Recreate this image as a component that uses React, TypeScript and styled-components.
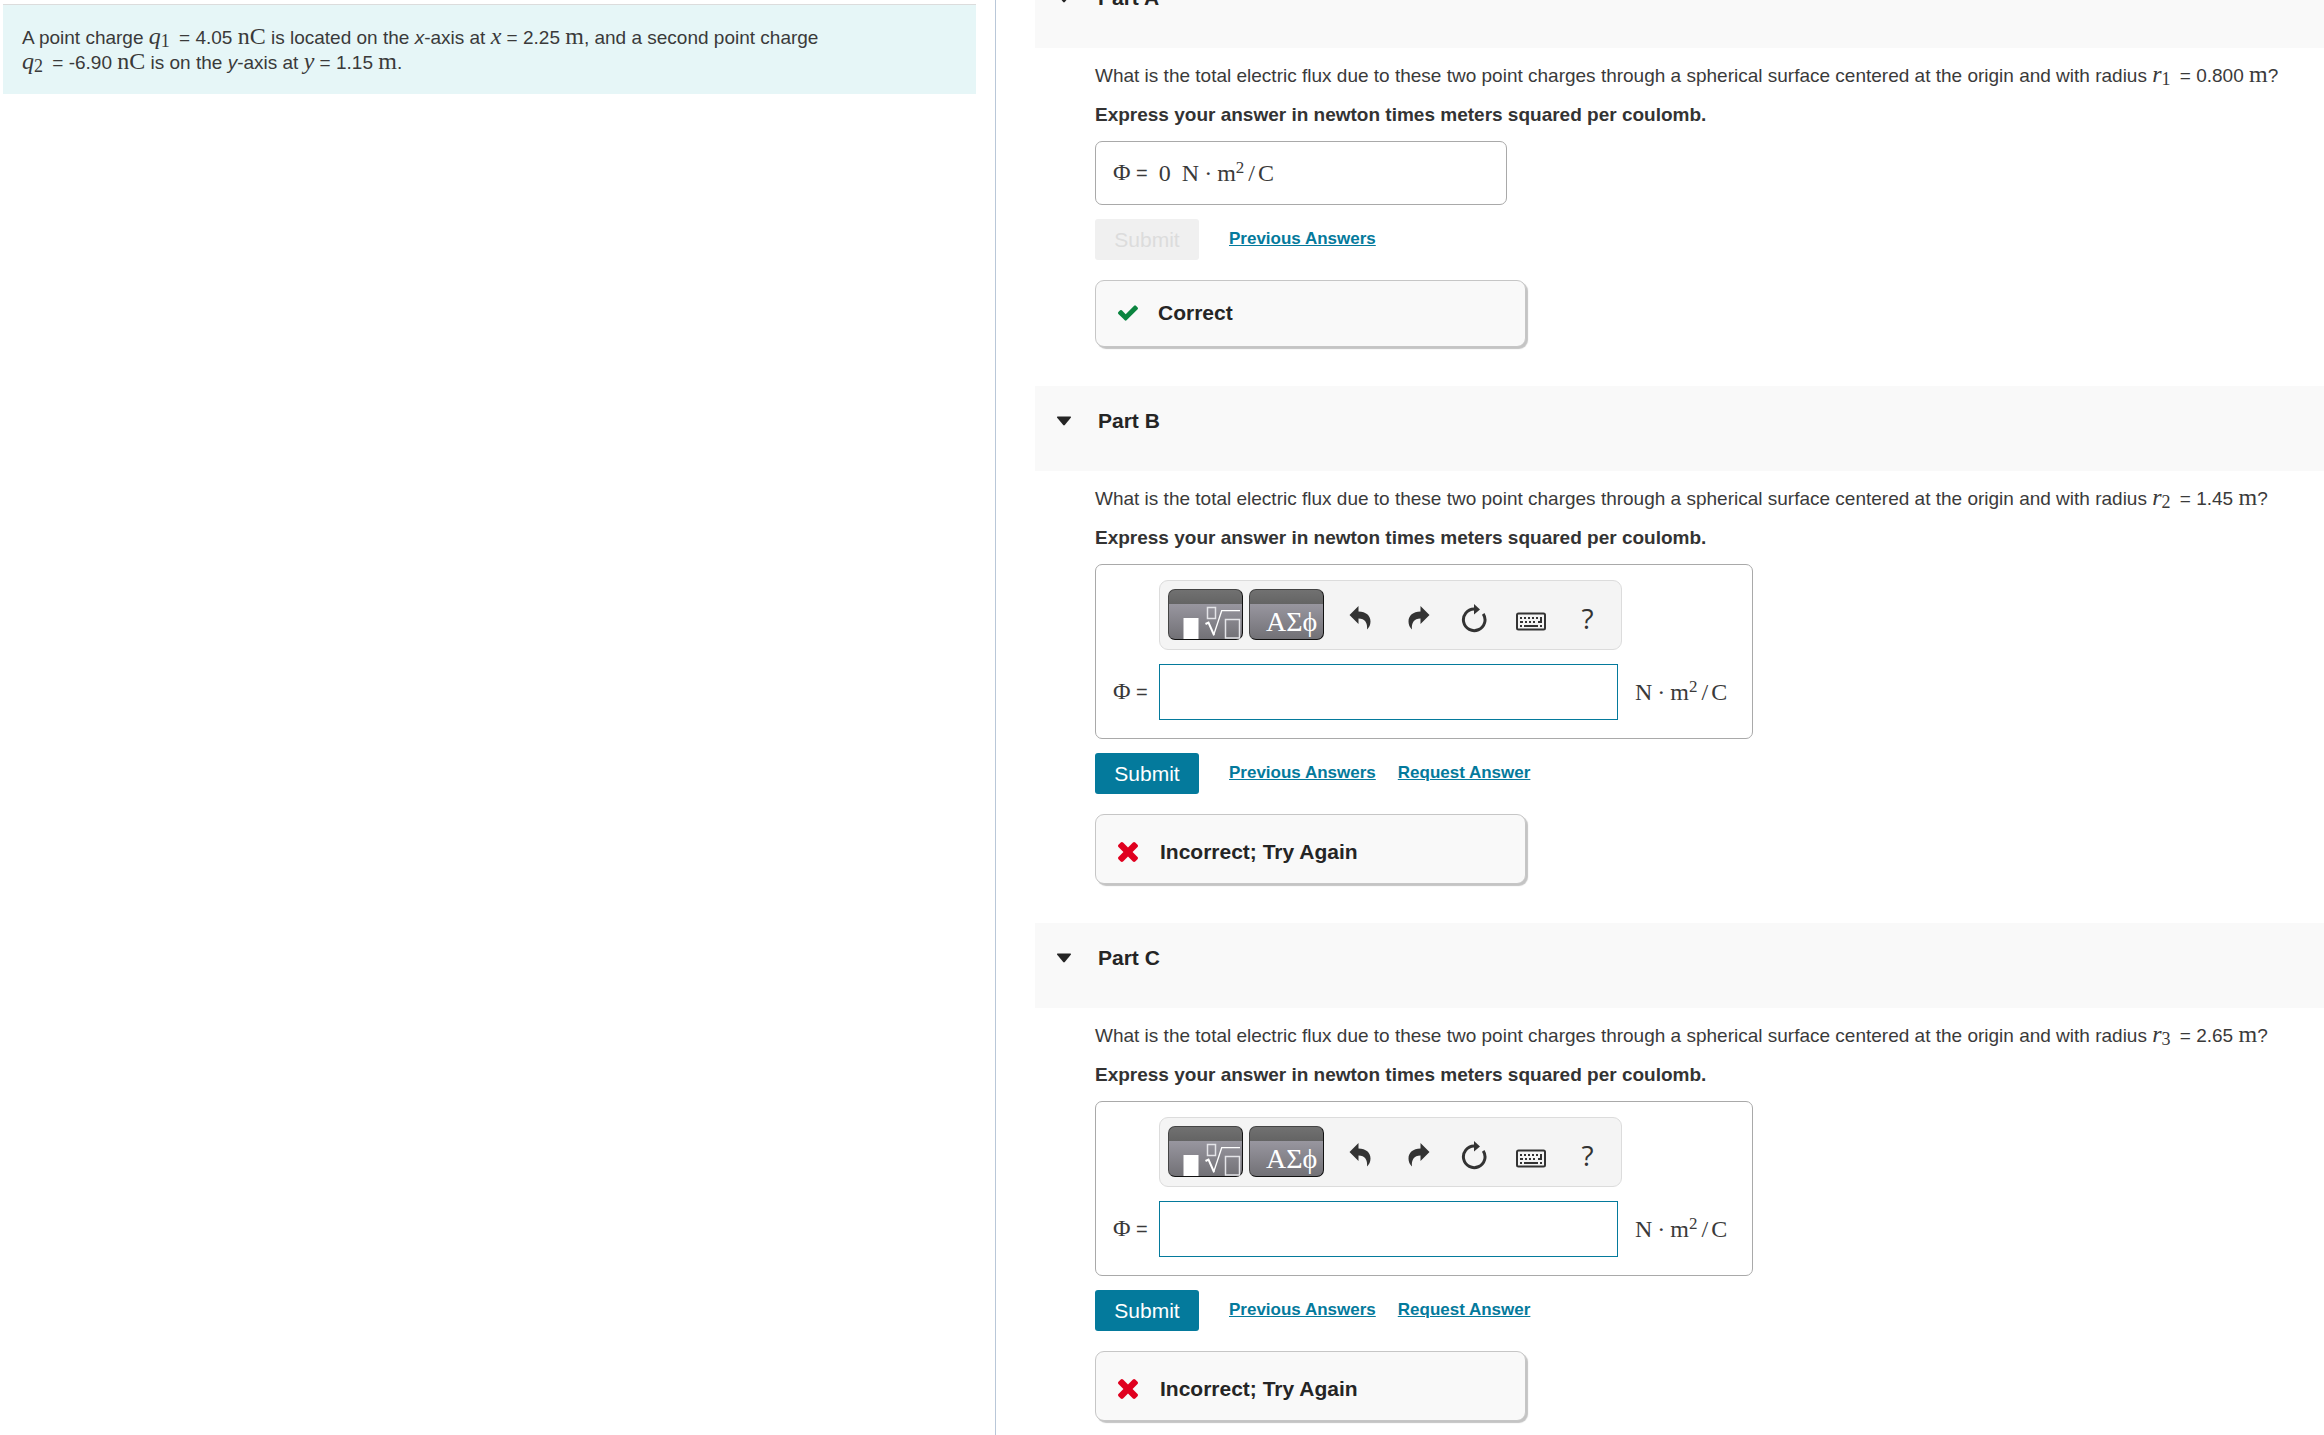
import React, { useId } from "react";
import styled, { createGlobalStyle, css } from "styled-components";

const sans = `"Liberation Sans", Arial, Helvetica, sans-serif`;
const serif = `"Liberation Serif", "Times New Roman", serif`;

const GlobalStyle = createGlobalStyle`
  *, *::before, *::after { box-sizing: border-box; }
  body { margin: 0; background: #fff; color: #3a3a3a; font-family: ${sans}; }
`;

/* ---------- page frame ---------- */

const Page = styled.div`
  display: grid;
  grid-template-columns: 3fr 4fr;
  height: 100vh;
  overflow: hidden;
`;

const ProblemPane = styled.aside`
  padding: 4px 19px 0 3px;
  border-right: 1px solid #b9c7d8;
`;

const Statement = styled.p`
  margin: 0;
  padding: 20px 134px 19px 19px;
  border-top: 1px solid #dcdcdc;
  background: #e6f6f7;
  font-size: 19px;
  line-height: 25px;
`;

const PartsPane = styled.main`
  min-width: 0;
  margin-top: -37px;
  padding-left: 39px;
`;

/* ---------- inline maths ---------- */

const Roman = styled.span`
  font-family: ${serif};
  font-size: 24px;
  line-height: 20px;
`;

const Variable = styled.i`
  font-family: ${serif};
  font-size: 24px;
  line-height: 20px;
`;

const Sub = styled.sub`
  margin-right: 4px;
  font-family: ${serif};
  font-size: 18px;
  line-height: 0;
  vertical-align: -3px;
`;

const Sup = styled.sup`
  font-size: 17px;
  line-height: 0;
  vertical-align: 8px;
`;

const UnitText = styled.span`
  font-family: ${serif};
  font-size: 24px;
  line-height: 28px;
  white-space: nowrap;
`;

const Dot = styled.span`
  margin: 0 5px;
`;

const Slash = styled.span`
  margin: 0 3px 0 4px;
`;

const Unit = () => (
  <UnitText>
    N<Dot>·</Dot>m<Sup>2</Sup>
    <Slash>/</Slash>C
  </UnitText>
);

/* ---------- part ---------- */

const PartSection = styled.section`
  padding-bottom: 39px;
`;

const PartHeader = styled.h2`
  margin: 0;
  padding: 23px 21px 38px;
  background: #f9f9f9;
`;

const Toggle = styled.button`
  display: flex;
  align-items: center;
  gap: 26px;
  padding: 0;
  border: 0;
  background: none;
  color: #252525;
  font: bold 21px/24px ${sans};
`;

const PartBody = styled.div`
  display: flex;
  flex-direction: column;
  align-items: flex-start;
  gap: 14px;
  padding: 15px 0 0 60px;
`;

const Prompt = styled.p<{ $strong?: boolean }>`
  margin: 0;
  font-size: 19px;
  line-height: 25px;
  white-space: nowrap;
  ${(p) => p.$strong && css`font-weight: bold; color: #333;`}
`;

const AnswerBox = styled.div`
  display: flex;
  align-items: center;
  gap: 11px;
  width: 412px;
  height: 64px;
  padding: 0 17px;
  border: 1px solid #a9a9a9;
  border-radius: 7px;
  font-size: 20px;
`;

const Editor = styled.div`
  display: grid;
  grid-template-columns: 46px 463px auto;
  align-items: center;
  row-gap: 14px;
  width: 658px;
  padding: 15px 12px 18px 17px;
  border: 1px solid #a9a9a9;
  border-radius: 7px;
`;

const Lhs = styled.label`
  grid-column: 1;
  font-size: 20px;
  line-height: 28px;
  white-space: nowrap;
`;

const UnitCell = styled.div`
  padding-left: 13px;
`;

const AnswerInput = styled.input`
  width: 459px;
  height: 56px;
  padding: 0 10px;
  border: 1px solid #047a9c;
  font: 20px ${sans};
  outline: none;
`;

/* ---------- toolbar ---------- */

const Toolbar = styled.div`
  grid-column: 2;
  display: flex;
  gap: 6px;
  padding: 8px 5px 9px 8px;
  border: 1px solid #dcdcdc;
  border-radius: 9px;
  background: #f4f4f4;
`;

const PaletteButton = styled.button`
  display: flex;
  flex: none;
  width: 75px;
  height: 51px;
  padding: 0;
  border: 1px solid #111;
  border-top-color: #444;
  border-left-color: #444;
  border-radius: 7px;
  background: linear-gradient(#717171 0, #646464 14px, #98969f 14px, #727176 100%);
  color: #fff;
  font: 28px/32px ${serif};
`;

const Greek = styled.span`
  padding: 16px 0 0 16px;
`;

const ToolGroup = styled.div`
  display: flex;
  padding-left: 1px;
`;

const ToolButton = styled.button`
  display: flex;
  justify-content: center;
  align-items: center;
  width: 57px;
  height: 51px;
  padding: 7px 0 0;
  border: 0;
  background: none;
  color: #333;
  font: 28px/28px "Open Sans", ${sans};
`;

/* ---------- actions and feedback ---------- */

const Actions = styled.div`
  display: flex;
  align-items: center;
  margin-bottom: 6px;
`;

const SubmitButton = styled.button`
  width: 104px;
  height: 41px;
  margin-right: 30px;
  padding: 0;
  border: 0;
  border-radius: 3px;
  background: #047a9c;
  color: #fff;
  font: 21px/24px ${sans};

  &:disabled {
    background: #f0f0f0;
    color: #dcdcdc;
  }
`;

const ActionLink = styled.a`
  margin-right: 22px;
  padding-bottom: 2px;
  color: #047a9c;
  font-size: 17px;
  font-weight: bold;
  line-height: 24px;
  text-decoration: underline;
`;

const Feedback = styled.div<{ $correct: boolean }>`
  display: flex;
  align-items: center;
  gap: ${(p) => (p.$correct ? "20px" : "22px")};
  width: 431px;
  padding: ${(p) => (p.$correct ? "20px 22px 21px" : "25px 22px 19px")};
  border: 1px solid #c6c6c6;
  border-radius: 9px;
  background: #f9f9f9;
  box-shadow: 2px 2px 1px #c4c4c4;
  color: #252525;
  font-size: 21px;
  font-weight: bold;
  line-height: 24px;
`;

/* ---------- icons ---------- */

const Caret = () => (
  <svg width="16" height="10" viewBox="0 0 16 10" aria-hidden="true">
    <path d="M1.5 .5h13q1 .3.3 1.2L8.8 9Q8 9.8 7.2 9L1.2 1.7Q.5.8 1.5.5Z" fill="#252525" />
  </svg>
);

const CheckIcon = () => (
  <svg width="20" height="16" viewBox="121 334 1550 1188" aria-hidden="true">
    <path
      fill="#0b8540"
      d="M1671 566q0 40-28 68l-724 724-136 136q-28 28-68 28t-68-28l-136-136-362-362q-28-28-28-68t28-68l136-136q28-28 68-28t68 28l294 295 656-657q28-28 68-28t68 28l136 136q28 28 28 68z"
    />
  </svg>
);

const CrossIcon = () => (
  <svg width="20" height="20" viewBox="302 366 1188 1188" aria-hidden="true">
    <path
      fill="#e0001f"
      d="M1490 1322q0 40-28 68l-136 136q-28 28-68 28t-68-28l-294-294-294 294q-28 28-68 28t-68-28l-136-136q-28-28-28-68t28-68l294-294-294-294q-28-28-28-68t28-68l136-136q28-28 68-28t68 28l294 294 294-294q28-28 68-28t68 28l136 136q28 28 28 68t-28 68l-294 294 294 294q28 28 28 68z"
    />
  </svg>
);

const TemplatesIcon = () => (
  <svg width="73" height="49" viewBox="1 1 73 49" fill="none" stroke="#fff" aria-hidden="true">
    <rect x="15.5" y="29" width="15" height="21" fill="#fff" stroke="none" />
    <rect x="39.5" y="18.5" width="8" height="11" stroke="#e4e4e8" strokeWidth="1.5" />
    <path d="M37.5 35l3-1.5 5.5 12.5" strokeWidth="2" />
    <path d="M45.5 46.5L53.7 21.7H72" strokeWidth="1.3" />
    <rect x="57.5" y="30.5" width="14" height="18.5" stroke="#e4e4e8" strokeWidth="1.5" />
  </svg>
);

const arrowPath =
  "M4.5 12L13.5 3V8.5C21 8.7 25.5 12.5 25.5 18.5C25.5 21.5 24.3 24.5 22 26.5C22.8 20 20 15.8 13.5 15.6V21Z";

const UndoIcon = () => (
  <svg width="30" height="30" viewBox="0 0 30 30" aria-hidden="true">
    <path d={arrowPath} fill="currentColor" />
  </svg>
);

const RedoIcon = () => (
  <svg width="30" height="30" viewBox="0 0 30 30" aria-hidden="true">
    <path d={arrowPath} fill="currentColor" transform="matrix(-1 0 0 1 32 0)" />
  </svg>
);

const ResetIcon = () => (
  <svg width="30" height="30" viewBox="0 0 30 30" aria-hidden="true">
    <path d="M24.2 10.8A10.8 10.8 0 1 1 15 6" fill="none" stroke="currentColor" strokeWidth="3" />
    <path d="M15 1L21 6.5L15 11.5Z" fill="currentColor" />
  </svg>
);

const KeyboardIcon = () => (
  <svg width="30" height="30" viewBox="0 0 30 30" aria-hidden="true">
    <rect x="1" y="10.5" width="28" height="16" rx="1.5" fill="none" stroke="currentColor" strokeWidth="2" />
    <path
      fill="currentColor"
      d="M4 14h2v2H4zM8 14h2v2H8zM12 14h2v2h-2zM16 14h2v2h-2zM20 14h2v2h-2zM24 14h2v6h-4v-2h2zM4 18h3v2H4zM9 18h2v2H9zM13 18h2v2h-2zM17 18h2v2h-2zM4 22h2v2H4zM8 22h14v2H8zM24 22h2v2h-2z"
    />
  </svg>
);

/* ---------- composed pieces ---------- */

const AnswerEditor = () => {
  const id = useId();
  return (
    <Editor>
      <Toolbar role="toolbar" aria-label="Equation tools">
        <PaletteButton type="button" aria-label="Templates">
          <TemplatesIcon />
        </PaletteButton>
        <PaletteButton type="button" aria-label="Symbols">
          <Greek>ΑΣϕ</Greek>
        </PaletteButton>
        <ToolGroup>
          <ToolButton type="button" aria-label="Undo"><UndoIcon /></ToolButton>
          <ToolButton type="button" aria-label="Redo"><RedoIcon /></ToolButton>
          <ToolButton type="button" aria-label="Reset"><ResetIcon /></ToolButton>
          <ToolButton type="button" aria-label="Keyboard shortcuts"><KeyboardIcon /></ToolButton>
          <ToolButton type="button" aria-label="Help">?</ToolButton>
        </ToolGroup>
      </Toolbar>
      <Lhs htmlFor={id}><Roman>Φ</Roman> =</Lhs>
      <AnswerInput id={id} type="text" />
      <UnitCell><Unit /></UnitCell>
    </Editor>
  );
};

interface PartProps {
  letter: string;
  index: number;
  radius: string;
  solved?: string;
}

const Part = ({ letter, index, radius, solved }: PartProps) => {
  const correct = solved !== undefined;
  return (
    <PartSection>
      <PartHeader>
        <Toggle type="button" aria-expanded="true"><Caret />Part {letter}</Toggle>
      </PartHeader>
      <PartBody>
        <Prompt>
          What is the total electric flux due to these two point charges through a spherical surface
          centered at the origin and with radius <Variable>r</Variable><Sub>{index}</Sub> = {radius}{" "}
          <Roman>m</Roman>?
        </Prompt>
        <Prompt $strong>Express your answer in newton times meters squared per coulomb.</Prompt>
        {correct ? (
          <AnswerBox>
            <span><Roman>Φ</Roman> =</span>
            <Roman>{solved}</Roman>
            <Unit />
          </AnswerBox>
        ) : (
          <AnswerEditor />
        )}
        <Actions>
          <SubmitButton type="button" disabled={correct}>Submit</SubmitButton>
          <ActionLink href="#previous">Previous Answers</ActionLink>
          {!correct && <ActionLink href="#request">Request Answer</ActionLink>}
        </Actions>
        <Feedback $correct={correct}>
          {correct ? <CheckIcon /> : <CrossIcon />}
          <span>{correct ? "Correct" : "Incorrect; Try Again"}</span>
        </Feedback>
      </PartBody>
    </PartSection>
  );
};

export default function App() {
  return (
    <>
      <GlobalStyle />
      <Page>
        <ProblemPane>
          <Statement>
            A point charge <Variable>q</Variable><Sub>1</Sub> = 4.05 <Roman>nC</Roman> is located on
            the <i>x</i>-axis at <Variable>x</Variable> = 2.25 <Roman>m</Roman>, and a second point
            charge <Variable>q</Variable><Sub>2</Sub> = -6.90 <Roman>nC</Roman> is on the <i>y</i>
            -axis at <Variable>y</Variable> = 1.15 <Roman>m</Roman>.
          </Statement>
        </ProblemPane>
        <PartsPane>
          <Part letter="A" index={1} radius="0.800" solved="0" />
          <Part letter="B" index={2} radius="1.45" />
          <Part letter="C" index={3} radius="2.65" />
        </PartsPane>
      </Page>
    </>
  );
}
